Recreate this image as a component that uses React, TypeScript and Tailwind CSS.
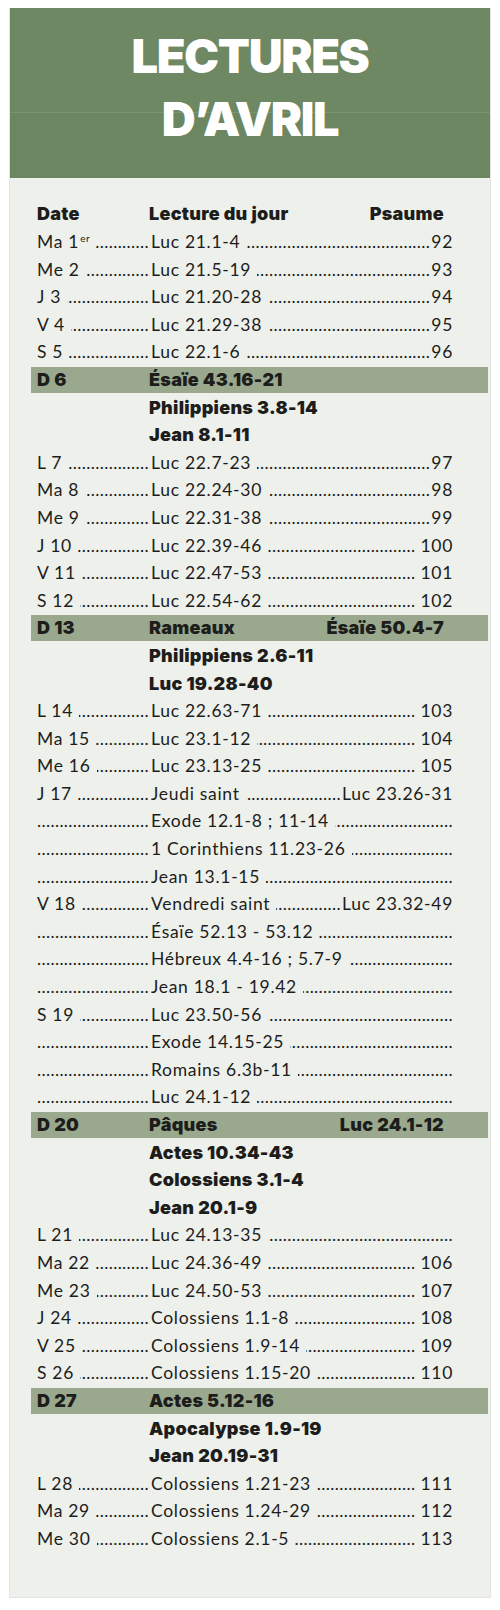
import React from 'react';

type Row =
  | { kind: 'row'; date: string; sup?: string; reading: string; right?: string }
  | { kind: 'band'; date: string; reading: string; right?: string }
  | { kind: 'sub'; reading: string };

const rows: Row[] = [
  { kind: 'row', date: 'Ma 1', sup: 'er', reading: 'Luc 21.1-4', right: '92' },
  { kind: 'row', date: 'Me 2', reading: 'Luc 21.5-19', right: '93' },
  { kind: 'row', date: 'J 3', reading: 'Luc 21.20-28', right: '94' },
  { kind: 'row', date: 'V 4', reading: 'Luc 21.29-38', right: '95' },
  { kind: 'row', date: 'S 5', reading: 'Luc 22.1-6', right: '96' },
  { kind: 'band', date: 'D 6', reading: 'Ésaïe 43.16-21' },
  { kind: 'sub', reading: 'Philippiens 3.8-14' },
  { kind: 'sub', reading: 'Jean 8.1-11' },
  { kind: 'row', date: 'L 7', reading: 'Luc 22.7-23', right: '97' },
  { kind: 'row', date: 'Ma 8', reading: 'Luc 22.24-30', right: '98' },
  { kind: 'row', date: 'Me 9', reading: 'Luc 22.31-38', right: '99' },
  { kind: 'row', date: 'J 10', reading: 'Luc 22.39-46', right: '100' },
  { kind: 'row', date: 'V 11', reading: 'Luc 22.47-53', right: '101' },
  { kind: 'row', date: 'S 12', reading: 'Luc 22.54-62', right: '102' },
  { kind: 'band', date: 'D 13', reading: 'Rameaux', right: 'Ésaïe 50.4-7' },
  { kind: 'sub', reading: 'Philippiens 2.6-11' },
  { kind: 'sub', reading: 'Luc 19.28-40' },
  { kind: 'row', date: 'L 14', reading: 'Luc 22.63-71', right: '103' },
  { kind: 'row', date: 'Ma 15', reading: 'Luc 23.1-12', right: '104' },
  { kind: 'row', date: 'Me 16', reading: 'Luc 23.13-25', right: '105' },
  { kind: 'row', date: 'J 17', reading: 'Jeudi saint', right: 'Luc 23.26-31' },
  { kind: 'row', date: '', reading: 'Exode 12.1-8 ; 11-14' },
  { kind: 'row', date: '', reading: '1 Corinthiens 11.23-26' },
  { kind: 'row', date: '', reading: 'Jean 13.1-15' },
  { kind: 'row', date: 'V 18', reading: 'Vendredi saint', right: 'Luc 23.32-49' },
  { kind: 'row', date: '', reading: 'Ésaïe 52.13 - 53.12' },
  { kind: 'row', date: '', reading: 'Hébreux 4.4-16 ; 5.7-9' },
  { kind: 'row', date: '', reading: 'Jean 18.1 - 19.42' },
  { kind: 'row', date: 'S 19', reading: 'Luc 23.50-56' },
  { kind: 'row', date: '', reading: 'Exode 14.15-25' },
  { kind: 'row', date: '', reading: 'Romains 6.3b-11' },
  { kind: 'row', date: '', reading: 'Luc 24.1-12' },
  { kind: 'band', date: 'D 20', reading: 'Pâques', right: 'Luc 24.1-12' },
  { kind: 'sub', reading: 'Actes 10.34-43' },
  { kind: 'sub', reading: 'Colossiens 3.1-4' },
  { kind: 'sub', reading: 'Jean 20.1-9' },
  { kind: 'row', date: 'L 21', reading: 'Luc 24.13-35' },
  { kind: 'row', date: 'Ma 22', reading: 'Luc 24.36-49', right: '106' },
  { kind: 'row', date: 'Me 23', reading: 'Luc 24.50-53', right: '107' },
  { kind: 'row', date: 'J 24', reading: 'Colossiens 1.1-8', right: '108' },
  { kind: 'row', date: 'V 25', reading: 'Colossiens 1.9-14', right: '109' },
  { kind: 'row', date: 'S 26', reading: 'Colossiens 1.15-20', right: '110' },
  { kind: 'band', date: 'D 27', reading: 'Actes 5.12-16' },
  { kind: 'sub', reading: 'Apocalypse 1.9-19' },
  { kind: 'sub', reading: 'Jean 20.19-31' },
  { kind: 'row', date: 'L 28', reading: 'Colossiens 1.21-23', right: '111' },
  { kind: 'row', date: 'Ma 29', reading: 'Colossiens 1.24-29', right: '112' },
  { kind: 'row', date: 'Me 30', reading: 'Colossiens 2.1-5', right: '113' },
];

const DOTS = '.'.repeat(120);

function Leader() {
  // dots fill the gap, clipped on the left so they end flush against the next text
  return (
    <span className="flex-1 min-w-0 overflow-hidden whitespace-nowrap flex justify-end tracking-[0.02em]">
      <span className="shrink-0">{DOTS}</span>
    </span>
  );
}

const bold = "font-['Inter','Lato',sans-serif] font-black text-[18px] tracking-[0.015em]";

function ReadingRow({ row }: { row: Extract<Row, { kind: 'row' }> }) {
  const isNumber = row.right !== undefined && /^\d+$/.test(row.right);
  const wide = isNumber && row.right!.length > 2;
  return (
    <div className="flex items-baseline h-[27.6px] leading-[27.6px] pl-[6px] pr-[35px] tracking-[0.04em]">
      <div className="w-[114px] shrink-0 flex items-baseline pr-[2px]">
        {row.date && (
          <span className="whitespace-nowrap pr-[6px]">
            {row.date}
            {row.sup && <span className="text-[10px] ml-[1px] relative -top-[6px]">{row.sup}</span>}
          </span>
        )}
        <Leader />
      </div>
      <div className="flex-1 min-w-0 flex items-baseline">
        <span className="whitespace-nowrap pr-[6px]">{row.reading}</span>
        <Leader />
        {row.right && (
          <span className={wide ? 'whitespace-nowrap pl-[5px]' : 'whitespace-nowrap pl-[1px]'}>{row.right}</span>
        )}
      </div>
    </div>
  );
}

function BandRow({ row }: { row: Extract<Row, { kind: 'band' }> }) {
  return (
    <div className={`flex items-baseline h-[26px] leading-[26px] my-[0.8px] bg-[#9aa98e] pl-[6px] pr-[44px] ${bold}`}>
      <div className="w-[112px] shrink-0">{row.date}</div>
      <div className="flex-1">{row.reading}</div>
      {row.right && <div className="whitespace-nowrap">{row.right}</div>}
    </div>
  );
}

function SubRow({ reading }: { reading: string }) {
  return (
    <div className={`flex items-baseline h-[27.6px] leading-[27.6px] pl-[118px] ${bold}`}>{reading}</div>
  );
}

export default function App() {
  return (
    <div className="min-h-[1610px] bg-white pt-[8px] pl-[9px] font-['Lato','Noto_Sans',sans-serif] text-[#1d1d1b]">
      <div className="w-[482px] border-x border-b border-[#e3e6e0]">
        <header className="h-[170px] pt-[16px] bg-[linear-gradient(to_bottom,#6d8862_0px,#6d8862_104px,#7a9470_104px,#7a9470_105px,#6b8660_105px)] text-center text-white font-['Inter','Lato',sans-serif] font-black text-[47px] leading-[63px] tracking-[-0.03em]">
          <div>LECTURES</div>
          <div>D’AVRIL</div>
        </header>

        <div className="bg-[#edf0eb] pt-[21px] pb-[44px] pl-[21px] pr-[2px] text-[17.5px]">
          <div className={`flex items-baseline h-[29px] leading-[29px] pl-[6px] pr-[44px] ${bold}`}>
            <div className="w-[112px] shrink-0">Date</div>
            <div className="flex-1">Lecture du jour</div>
            <div>Psaume</div>
          </div>
          {rows.map((row, i) => {
            if (row.kind === 'band') return <BandRow key={i} row={row} />;
            if (row.kind === 'sub') return <SubRow key={i} reading={row.reading} />;
            return <ReadingRow key={i} row={row} />;
          })}
        </div>
      </div>
    </div>
  );
}
